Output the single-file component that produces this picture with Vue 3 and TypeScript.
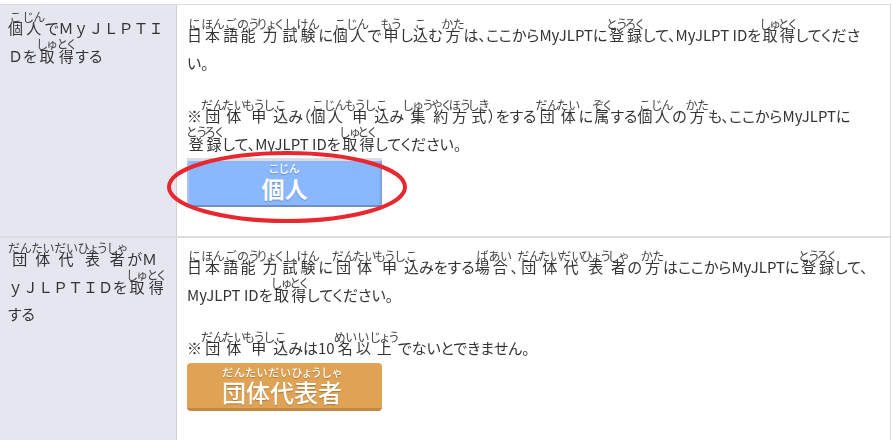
<script setup lang="ts">
type Seg = { base: string; ruby?: string; wide?: boolean }
type Row = { label: string; paragraphs: string[][]; button: 'personal' | 'group' }

// "個{こ}" = base character with its reading, full-width latin keeps its full width
const parse = (text: string): Seg[] =>
  [...text.matchAll(/([^{}])\{([^}]+)\}|([Ａ-ｚ]+)|([^{}Ａ-ｚ]+?)(?=[^{}]\{|[Ａ-ｚ]|$)/g)].map((m) => {
    if (m[1]) return { base: m[1], ruby: m[2] }
    if (m[3]) return { base: m[3], wide: true }
    return { base: m[4] }
  })

const rows: Row[] = [
  {
    label: '個{こ}人{じん}でＭｙＪＬＰＴＩＤを取{しゅ}得{とく}する',
    paragraphs: [
      [
        '日{に}本{ほん}語{ご}能{のう}力{りょく}試{し}験{けん}に個{こ}人{じん}で申{もう}し込{こ}む方{かた}は、ここからMyJLPTに登{とう}録{ろく}して、MyJLPT IDを取{しゅ}得{とく}してくださ',
        'い。',
      ],
      [
        '※団{だん}体{たい}申{もうし}込{こ}み（個{こ}人{じん}申{もうし}込{こ}み集{しゅう}約{やく}方{ほう}式{しき}）をする団{だん}体{たい}に属{ぞく}する個{こ}人{じん}の方{かた}も、ここからMyJLPTに',
        '登{とう}録{ろく}して、MyJLPT IDを取{しゅ}得{とく}してください。',
      ],
    ],
    button: 'personal',
  },
  {
    label: '団{だん}体{たい}代{だい}表{ひょう}者{しゃ}がＭｙＪＬＰＴＩＤを取{しゅ}得{とく}する',
    paragraphs: [
      [
        '日{に}本{ほん}語{ご}能{のう}力{りょく}試{し}験{けん}に団{だん}体{たい}申{もうし}込{こ}みをする場{ば}合{あい}、団{だん}体{たい}代{だい}表{ひょう}者{しゃ}の方{かた}はここからMyJLPTに登{とう}録{ろく}して、',
        'MyJLPT IDを取{しゅ}得{とく}してください。',
      ],
      ['※団{だん}体{たい}申{もうし}込{こ}みは10名{めい}以{い}上{じょう}でないとできません。'],
    ],
    button: 'group',
  },
]
</script>

<template>
  <div class="page">
    <div v-for="row in rows" :key="row.button" class="row">
      <div class="label">
        <template v-for="(seg, i) in parse(row.label)" :key="i">
          <ruby v-if="seg.ruby">{{ seg.base }}<rt>{{ seg.ruby }}</rt></ruby>
          <span v-else-if="seg.wide" class="wide">{{ seg.base }}</span>
          <template v-else>{{ seg.base }}</template>
        </template>
      </div>
      <div class="body">
        <p v-for="(para, p) in row.paragraphs" :key="p" class="para">
          <span v-for="(line, l) in para" :key="l" class="line">
            <template v-for="(seg, i) in parse(line)" :key="i">
              <ruby v-if="seg.ruby">{{ seg.base }}<rt>{{ seg.ruby }}</rt></ruby>
              <template v-else>{{ seg.base }}</template>
            </template>
          </span>
        </p>
        <div v-if="row.button === 'personal'" class="btn btn-personal">
          <span class="btn-ruby">こじん</span>
          <span class="btn-text">個人</span>
          <svg class="circle" width="250" height="80" viewBox="0 0 250 80" aria-hidden="true">
            <ellipse cx="125" cy="40" rx="118" ry="34" fill="none" stroke="#e8282e" stroke-width="4" />
          </svg>
        </div>
        <div v-else class="btn btn-group">
          <span class="btn-ruby">だんたいだいひょうしゃ</span>
          <span class="btn-text">団体代表者</span>
        </div>
      </div>
    </div>
  </div>
</template>

<style>
html,
body {
  margin: 0;
  background: #fff;
  overflow: hidden;
}
</style>

<style scoped>
.page {
  width: 891px;
  height: 436px;
  box-sizing: border-box;
  overflow: hidden;
  border-top: 1px solid #dcdcdc;
  border-right: 1px solid #dcdcdc;
  margin-top: 4px;
  font-family: 'Noto Sans CJK JP', 'Open Sans', sans-serif;
  font-size: 15px;
  font-feature-settings: 'palt';
  line-height: 27.5px;
  color: #333;
  filter: blur(0.45px);
}

.row {
  display: grid;
  grid-template-columns: 177px 1fr;
  height: 231px;
  border-bottom: 2px solid #dcdcdc;
}

.row + .row {
  height: 240px;
  border-bottom: 0;
}

.label {
  background: #e6e6f0;
  border-right: 1px solid #cfcfd6;
  padding: 9px 10px 0 8px;
}

.row + .row .label {
  padding-top: 7px;
}

.body {
  padding: 16px 6px 0 10px;
}

.row + .row .body {
  padding-top: 15px;
}

.para {
  margin: 0 0 26px;
}

.line {
  display: block;
}

.wide {
  font-feature-settings: normal;
}

/* inline-flex so the reading overlaps the line above without making it taller */
ruby {
  display: inline-flex;
  flex-direction: column;
  align-items: center;
}

rt {
  display: block;
  height: 0;
  margin: 0 -1px;
  font-size: 12px;
  line-height: 0;
  white-space: nowrap;
  color: #444;
  transform: translateY(-25px);
}

.label rt {
  margin: 0;
}

.btn {
  position: relative;
  width: 195px;
  box-sizing: border-box;
  display: flex;
  flex-direction: column;
  align-items: center;
  color: #fff;
  margin-top: -25px;
  text-shadow: 0 1px 1px rgba(0, 0, 0, 0.25);
}

.btn-personal {
  height: 49px;
  background: #8ab8ff;
  border-top: 3px solid #d9dde3;
  border-bottom: 2px solid #6d8fc8;
  box-shadow: inset 2px 0 2px #a9c8f5, inset -2px 0 2px #7c9fd8;
}

.btn-personal .btn-text {
  font-size: 23px;
  line-height: 27px;
  font-weight: 700;
}

.btn-group {
  height: 48px;
  background: #e0a254;
  border-radius: 4px;
  border-bottom: 3px solid #c08a45;
  padding: 2px 5px 0 0;
}

.btn-group .btn-text {
  font-size: 24px;
  line-height: 26px;
  font-weight: 500;
  font-feature-settings: normal;
}

.btn-group .btn-ruby {
  letter-spacing: 1px;
}

.btn-ruby {
  font-size: 11px;
  line-height: 14px;
  font-weight: 500;
  letter-spacing: 0.5px;
}

.circle {
  position: absolute;
  left: -25px;
  top: -14px;
}
</style>
